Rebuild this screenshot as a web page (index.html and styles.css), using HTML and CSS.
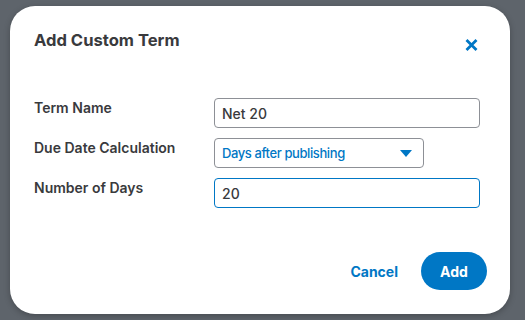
FILE: index.html
```html
<!DOCTYPE html>
<html lang="en">
<head>
  <meta charset="UTF-8">
  <meta name="viewport" content="width=device-width, initial-scale=1.0">
  <title>Add Custom Term</title>
  <link rel="stylesheet" href="styles.css">
</head>
<body>
  <div class="dialog">
    <div class="dialog-header">
      <h2>Add Custom Term</h2>
      <button class="close-btn" aria-label="Close">
        <svg width="13" height="12" viewBox="0 0 13 12">
          <path d="M1.5 1 L11.5 11 M11.5 1 L1.5 11" stroke="#0077c5" stroke-width="2.8" stroke-linecap="butt" fill="none"/>
        </svg>
      </button>
    </div>

    <div class="term-form">
      <label for="term-name">Term Name</label>
      <input id="term-name" class="text-input" type="text" value="Net 20">

      <label for="due-calc">Due Date Calculation</label>
      <div id="due-calc" class="select-box">
        <span>Days after publishing</span>
        <svg class="caret" width="12" height="7" viewBox="0 0 12 7">
          <path d="M0 0 H12 L6 7 Z" fill="#0077c5"/>
        </svg>
      </div>

      <label for="num-days">Number of Days</label>
      <input id="num-days" class="text-input focused" type="text" value="20">
    </div>

    <div class="dialog-footer">
      <button class="cancel-btn">Cancel</button>
      <button class="add-btn">Add</button>
    </div>
  </div>
</body>
</html>
```

FILE: styles.css
```css
* {
  box-sizing: border-box;
}

body {
  margin: 0;
  padding: 6px 0 0 10px;
  height: 320px;
  background-color: #5e646b;
  font-family: Inter, "Noto Sans", sans-serif;
  color: #393a3d;
  overflow: hidden;
}

.dialog {
  width: 500px;
  background: white;
  border-radius: 25px;
  padding: 22px 23px 24px 24px;
  box-shadow: 0 2px 6px rgba(0, 0, 0, 0.25);
}

.dialog-header {
  display: flex;
  justify-content: space-between;
  align-items: flex-start;
}

.dialog-header h2 {
  margin: 0;
  font-size: 16.6px;
  line-height: 24px;
  font-weight: 700;
}

.close-btn {
  width: 32px;
  height: 32px;
  margin-top: 1px;
  border: none;
  background: none;
  padding: 0;
  display: flex;
  align-items: center;
  justify-content: center;
  cursor: pointer;
}

.term-form {
  display: grid;
  grid-template-columns: 180px 266px;
  row-gap: 10px;
  margin-top: 37px;
}

.term-form label {
  font-size: 14px;
  font-weight: 600;
  line-height: 20px;
}

.text-input {
  height: 30px;
  border: 1px solid #8d9096;
  border-radius: 4px;
  padding: 0 7px;
  font-family: inherit;
  font-size: 14px;
  font-weight: 500;
  color: #393a3d;
  outline: none;
}

.text-input.focused {
  border-color: #0077c5;
}

.select-box {
  width: 210px;
  height: 30px;
  border: 1px solid #8d9096;
  border-radius: 4px;
  padding: 0 11px 0 7px;
  display: flex;
  align-items: center;
  justify-content: space-between;
  font-size: 13px;
  letter-spacing: -0.4px;
  font-weight: 500;
  color: #0077c5;
}

.dialog-footer {
  display: flex;
  justify-content: flex-end;
  align-items: center;
  gap: 9px;
  margin-top: 44px;
}

.dialog-footer button {
  font-family: inherit;
  font-size: 14px;
  font-weight: 700;
  border: none;
  cursor: pointer;
}

.cancel-btn {
  background: none;
  color: #0077c5;
  padding: 0 14px;
  height: 38px;
}

.add-btn {
  background: #0077c5;
  color: white;
  width: 66px;
  height: 38px;
  border-radius: 19px;
}
```
